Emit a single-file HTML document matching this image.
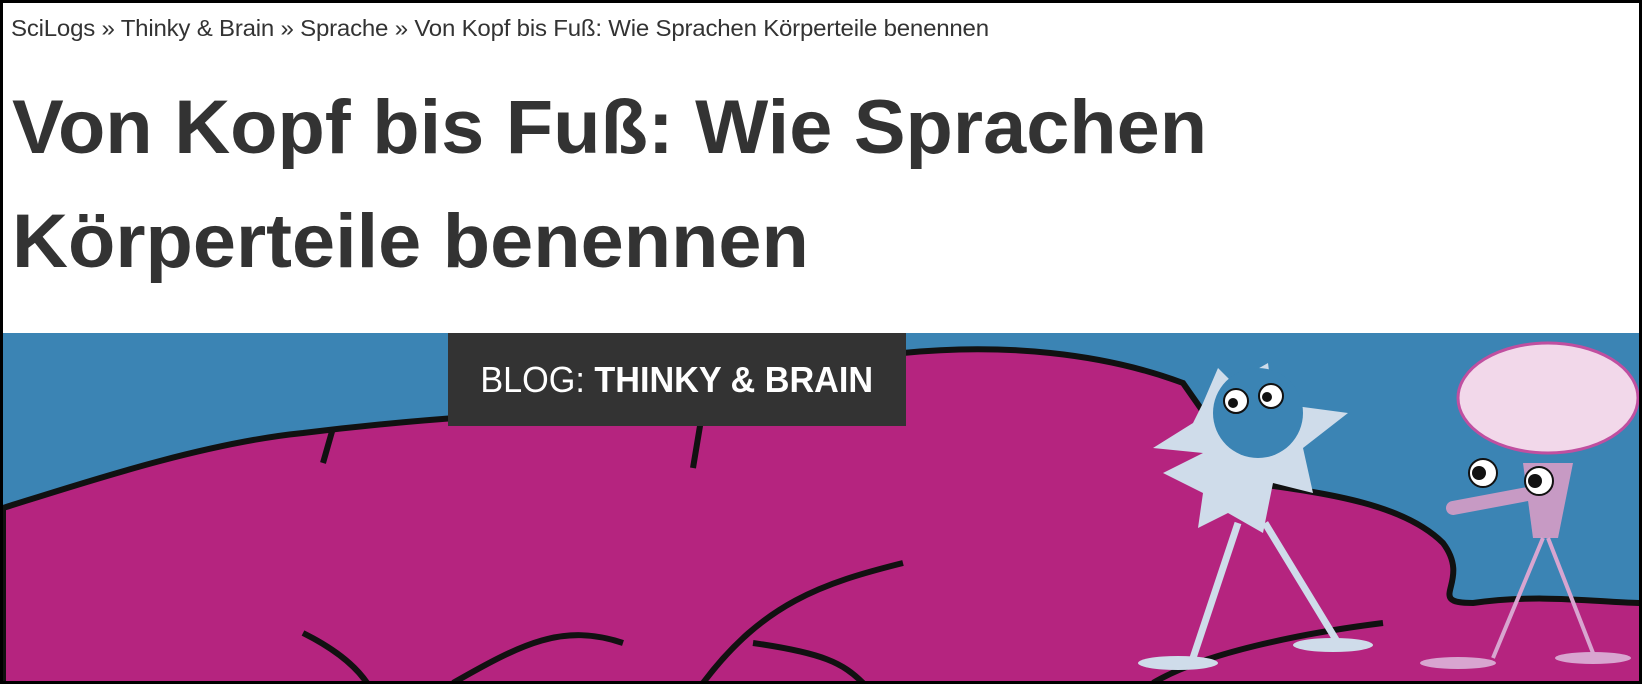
<!DOCTYPE html>
<html><head><meta charset="utf-8"><style>
html,body{margin:0;padding:0}
body{width:1642px;height:684px;overflow:hidden;background:#fff;position:relative;font-family:"Liberation Sans",sans-serif}
.frame{position:absolute;left:0;top:0;width:1636px;height:678px;border:3px solid #000;overflow:hidden}
.bc{position:absolute;left:8px;top:12px;font-size:23px;color:#333;white-space:nowrap;transform:scaleX(1.045);transform-origin:left;letter-spacing:-0.2px}
.t{position:absolute;left:9px;font-size:76px;font-weight:bold;color:#333;white-space:nowrap;transform:scaleX(1.02);transform-origin:left;line-height:1}
.band{position:absolute;left:0;top:330px;width:1636px;height:348px;background:#3b84b4}
.box{position:absolute;left:445px;top:330px;width:458px;height:93px;background:#333;color:#fff;font-size:36px;line-height:93px;text-align:center;white-space:nowrap}
.box span{display:inline-block;transform:scaleX(0.95)}
</style></head><body><div class="frame">
<div class="bc">SciLogs » Thinky &amp; Brain » Sprache » Von Kopf bis Fuß: Wie Sprachen Körperteile benennen</div>
<div class="t" style="top:87px">Von Kopf bis Fuß: Wie Sprachen</div>
<div class="t" style="top:201px">Körperteile benennen</div>
<div class="band">
<svg width="1636" height="348" viewBox="0 330 1636 348" style="position:absolute;left:0;top:0">
<path d="M0 505 C80 480 200 440 300 430 C420 415 520 410 640 405 C750 395 820 360 900 350 C1000 340 1100 350 1180 380 L1250 480 C1320 490 1400 500 1440 540 C1470 580 1420 600 1470 600 C1540 590 1600 600 1640 600 L1640 690 L0 690 Z" fill="#b5247f" stroke="#111" stroke-width="6"/>
<path d="M330 425 L320 460 M700 405 L690 465 M1380 620 C1300 630 1200 650 1150 680" stroke="#111" stroke-width="6" fill="none"/>
<path d="M450 680 C520 640 560 620 620 640 M700 680 C760 600 820 580 900 560 M300 630 C340 650 360 670 370 690 M750 640 C820 650 840 660 860 680" stroke="#111" stroke-width="6" fill="none"/>
<path d="M1200 400 L1215 365 L1230 380 L1265 360 L1270 400 L1345 410 L1300 445 L1310 490 L1270 480 L1260 530 L1225 510 L1195 525 L1200 490 L1160 470 L1200 450 L1150 445 L1190 420 Z" fill="#cfdcea"/>
<ellipse cx="1255" cy="410" rx="45" ry="45" fill="#3b84b4"/>
<circle cx="1233" cy="398" r="12" fill="#fff" stroke="#111" stroke-width="2"/><circle cx="1268" cy="393" r="12" fill="#fff" stroke="#111" stroke-width="2"/>
<circle cx="1230" cy="400" r="5" fill="#111"/><circle cx="1264" cy="394" r="5" fill="#111"/>
<path d="M1235 520 L1190 655 M1262 520 L1335 640" stroke="#cfdcea" stroke-width="7"/>
<ellipse cx="1175" cy="660" rx="40" ry="7" fill="#cfdcea"/><ellipse cx="1330" cy="642" rx="40" ry="7" fill="#cfdcea"/>
<ellipse cx="1545" cy="395" rx="90" ry="55" fill="#f2d8ea" stroke="#c04fa0" stroke-width="3"/>
<path d="M1520 460 L1570 460 L1555 535 L1530 535 Z" fill="#c79ac4"/>
<path d="M1450 505 L1530 490" stroke="#c79ac4" stroke-width="14" stroke-linecap="round"/>
<circle cx="1480" cy="470" r="14" fill="#fff" stroke="#111" stroke-width="2"/><circle cx="1536" cy="478" r="14" fill="#fff" stroke="#111" stroke-width="2"/>
<circle cx="1476" cy="470" r="7" fill="#111"/><circle cx="1532" cy="478" r="7" fill="#111"/>
<path d="M1540 535 L1490 655 M1545 535 L1590 650" stroke="#d8a5d0" stroke-width="4"/>
<ellipse cx="1455" cy="660" rx="38" ry="6" fill="#d8a5d0"/><ellipse cx="1590" cy="655" rx="38" ry="6" fill="#d8a5d0"/>
</svg>
</div>
<div class="box"><span>BLOG: <b>THINKY &amp; BRAIN</b></span></div>
</div></body></html>
